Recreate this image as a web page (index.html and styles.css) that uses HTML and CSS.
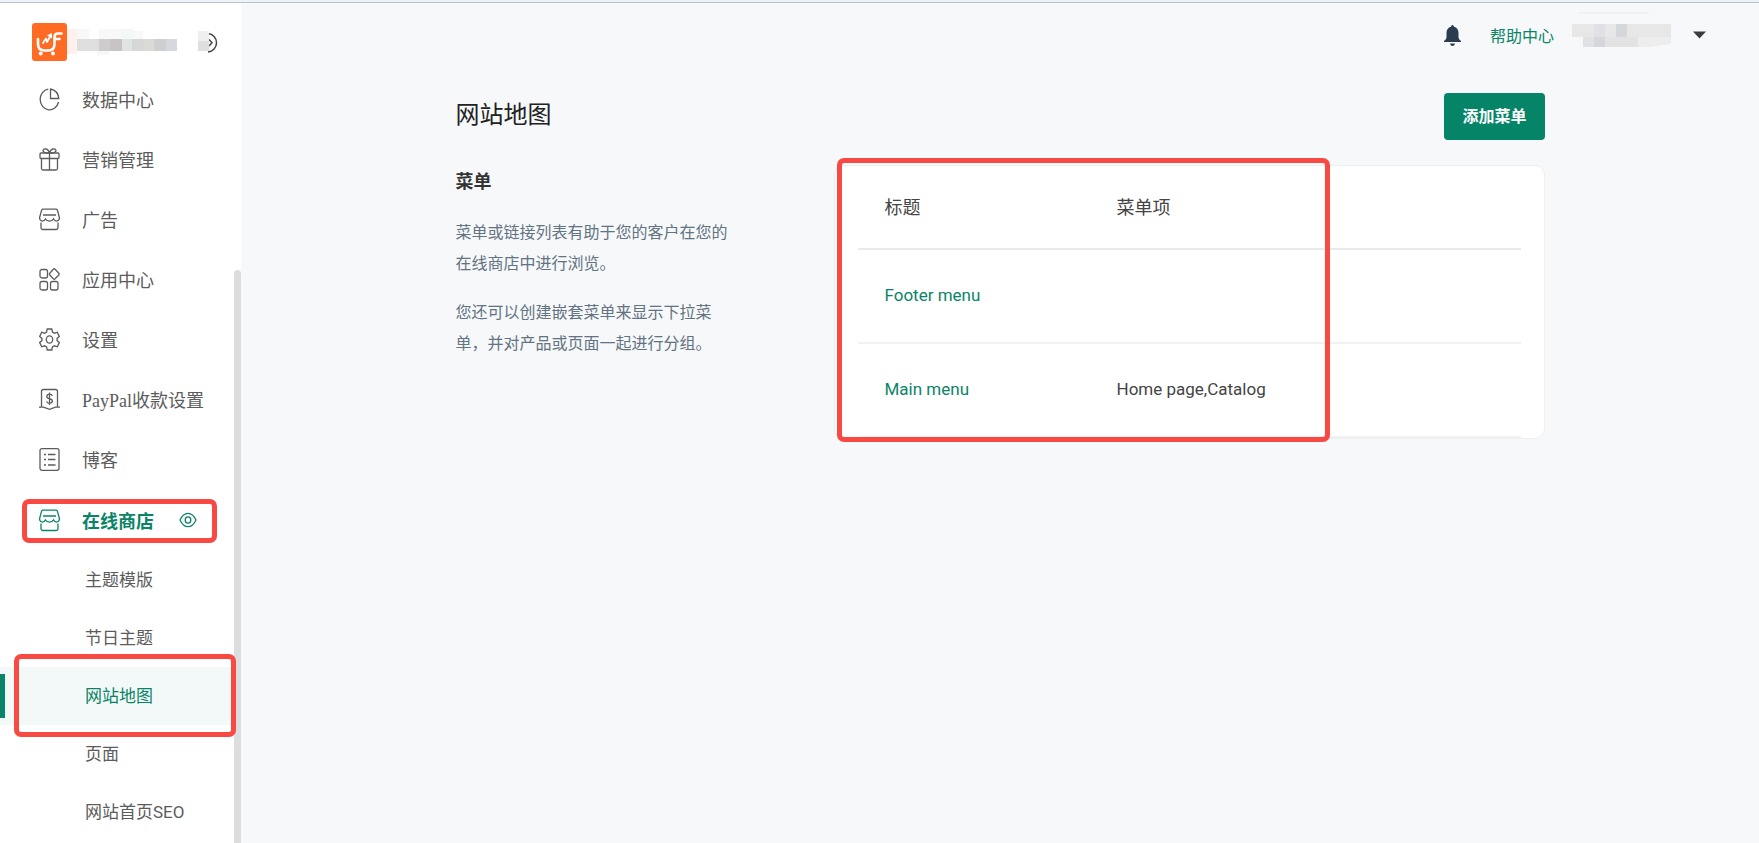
FILE: index.html
```html
<!DOCTYPE html>
<html lang="zh-CN">
<head>
	<meta charset="UTF-8">
	<title>网站地图</title>
	<link rel="stylesheet" href="styles.css">
</head>
<body>

	<!-- shared icons -->
	<svg class="sprite" aria-hidden="true">
		<symbol id="icon-store" viewBox="0 0 21 23">
			<path d="M4 1.200h13q1 0 1.400 1l2 7.300q.3 3.200-2.700 3.600-2.300 0-3.200-2.100-1.200 2.100-4 2.100t-4-2.100q-.9 2.100-3.200 2.100-3-.4-2.700-3.600l2-7.300q.4-1 1.400-1z"/>
			<path d="M4 7h13M2 14.500v5.300q0 1.700 1.700 1.700h13.600q1.700 0 1.700-1.700v-5.300"/>
		</symbol>
	</svg>

	<div class="layout">
		<aside class="sidebar">
			<div class="brand">
				<svg class="logo" viewBox="0 0 35 38">
					<rect width="35" height="38" rx="3" fill="#ff6b22"/>
					<g fill="none" stroke="#fff" stroke-width="2.600" stroke-linecap="round" stroke-linejoin="round">
						<path d="M6 16v5q0 6.500 6.500 6.500h4q6 0 6-6.500v-7q0-3.500 3.500-3.500h3.500M24 16h3.500"/>
						<path d="M11 20l3-4.500 1 3.500 3.500-6" stroke-width="1.800"/>
					</g>
					<path d="M15 12.500l4.800-2.500.3 5.500z" fill="#fff"/>
					<circle cx="8.700" cy="30.500" r="2" fill="#fff"/>
					<circle cx="21" cy="30.500" r="2" fill="#fff"/>
				</svg>
				<svg class="shop-name" viewBox="0 0 112 28" shape-rendering="crispEdges">
					<path fill="#fff0ee" d="M0 1h10v25H0z"/>
					<path fill="#f8f8f8" d="M10 1h12v10H10zM32 1h22v10H32zM66 3h10v8H66zM30 23h12v4H30z"/>
					<path fill="#f3f7f6" d="M54 1h12v10H54z"/>
					<path fill="#dedede" d="M10 11h22v12H10z"/>
					<path fill="#cfcccd" d="M32 11h11v12H32z"/>
					<path fill="#c8c3c5" d="M43 11h12v12H43z"/>
					<path fill="#dfe3e2" d="M55 11h10v12H55z"/>
					<path fill="#d7d7d8" d="M65 11h12v12H65z"/>
					<path fill="#dcdad6" d="M77 11h10v12H77z"/>
					<path fill="#cfcfd0" d="M87 11h12v12H87z"/>
					<path fill="#d6d8df" d="M99 11h11v12H99z"/>
				</svg>
				<button type="button" class="collapse" aria-label="收起">
					<svg viewBox="0 0 21 23">
						<path d="M10 2.500a9.500 9.300 0 0 1 0 18.500M11 8.500l3 3.200-3 3.200" fill="none" stroke="#444" stroke-width="1.500"/>
						<path d="M0 0h11v10H0z" fill="#efefef"/>
						<path d="M0 10h11v10H0z" fill="#dfdfdf"/>
					</svg>
				</button>
			</div>

			<ul class="menu">
				<li><a href="#"><svg class="icon" viewBox="0 0 21 23"><path d="M9.200 1.200A9.300 10.400 0 1 0 19.500 14"/><path d="M11.500 1v9.500h8.300Q19 2.500 11.500 1z"/></svg>数据中心</a></li>
				<li><a href="#"><svg class="icon" viewBox="0 0 21 23"><rect x="1" y="5" width="19" height="5.500" rx="1"/><path d="M2.500 10.500v10q0 1.500 1.500 1.500h13q1.500 0 1.500-1.500v-10M10.500 5v17M10.500 5Q4 5 4 2.500 4.500.5 7 1t3.500 4Q11.500 1.500 14 1t3 1.500Q17 5 10.500 5z"/></svg>营销管理</a></li>
				<li><a href="#"><svg class="icon"><use href="#icon-store"/></svg>广告</a></li>
				<li><a href="#"><svg class="icon" viewBox="0 0 21 23"><rect x="1" y="1.500" width="7.500" height="8.500" rx="2"/><rect x="1" y="13.500" width="7.500" height="8.500" rx="2"/><rect x="11.500" y="13.500" width="7.500" height="8.500" rx="2"/><path d="M14.300 1.200q.9-.8 1.800 0l3.700 4q.8.900 0 1.800l-3.700 3.800q-.9.800-1.800 0L10.800 7q-.8-.9 0-1.800z"/></svg>应用中心</a></li>
				<li><a href="#"><svg class="icon" viewBox="0 0 21 23"><path d="M8.200 1h4.600l.6 3 2 1.200 2.900-1 2 4.200-2.200 2v2.200l2.200 2-2 4.200-2.900-1-2 1.200-.6 3H8.200l-.6-3-2-1.200-2.900 1-2-4.200 2.200-2v-2.200l-2.200-2 2-4.200 2.900 1 2-1.200z"/><ellipse cx="10.500" cy="11.500" rx="3.200" ry="3.700"/></svg>设置</a></li>
				<li><a href="#"><svg class="icon" viewBox="0 0 21 23"><path d="M2.500 19V3.500q0-2 2-2h12q2 0 2 2V19M0 19.200h4.500l6 2.200 6-2.200H21M13.300 8q-.5-1.800-2.800-1.800T7.800 8.400q0 1.700 2.700 2.200t2.900 2.500q0 2-2.900 2.200-2.400 0-2.900-2M10.500 4.500v12.500"/></svg>PayPal收款设置</a></li>
				<li><a href="#"><svg class="icon" viewBox="0 0 21 23"><rect x="1" y="0.700" width="19" height="21.600" rx="2"/><path d="M5 6.500h2M9 6.500h7.500M5 11.500h2M9 11.500h7.500M5 17h2M9 17h7.500"/></svg>博客</a></li>
				<li class="current marked"><a href="#"><svg class="icon"><use href="#icon-store"/></svg>在线商店<svg class="eye" viewBox="0 0 18 16"><path d="M1 8q3.200-6.700 8-6.700T17 8q-3.200 6.700-8 6.700T1 8z"/><ellipse cx="9" cy="8" rx="2.800" ry="3.200"/></svg></a></li>
			</ul>

			<ul class="submenu">
				<li><a href="#">主题模版</a></li>
				<li><a href="#">节日主题</a></li>
				<li class="active marked"><a href="#">网站地图</a></li>
				<li><a href="#">页面</a></li>
				<li><a href="#">网站首页SEO</a></li>
			</ul>
			<div class="scroll-thumb"></div>
		</aside>

		<div class="page">
			<header class="topbar">
				<svg class="bell" viewBox="0 0 17 21" fill="#2b3c4e"><path d="M8.500 0q1.300 0 1.500 1.800 4.500 1.200 4.500 6.200v4.500q0 1.800 2.500 3.500v1H0v-1q2.500-1.700 2.500-3.500V8q0-5 4.500-6.200Q7.200 0 8.500 0zM6 18.500h5Q10.500 21 8.500 21T6 18.500z"/></svg>
				<a class="help" href="#">帮助中心</a>
				<button type="button" class="account" aria-label="账户">
					<svg class="user-name" viewBox="0 0 99 48" shape-rendering="crispEdges">
						<path fill="#f0f1f3" d="M6 1h71v2H6z"/>
						<path fill="#e7e7e8" d="M0 13h22v13H0zM33 13h11v13H33zM55 13h44v13H55z"/>
						<path fill="#e0e1e4" d="M22 13h11v13H22zM11 26h11v10H11z"/>
						<path fill="#d6d7db" d="M44 13h11v13H44zM22 26h11v10H22z"/>
						<path fill="#e3e3e4" d="M33 26h33v10H33z"/>
						<path fill="#ededee" d="M66 26h33v7l-22 3H66z"/>
					</svg>
					<svg class="caret" viewBox="0 0 13 8"><path d="M0 .5h13L6.500 7.500z" fill="#3c3c3c"/></svg>
				</button>
			</header>

			<main class="content">
				<div class="title-row">
					<h1>网站地图</h1>
					<button type="button" class="add">添加菜单</button>
				</div>
				<div class="columns">
					<section class="intro">
						<h2>菜单</h2>
						<p>菜单或链接列表有助于您的客户在您的在线商店中进行浏览。</p>
						<p>您还可以创建嵌套菜单来显示下拉菜单，并对产品或页面一起进行分组。</p>
					</section>
					<section class="card marked">
						<table>
							<thead>
								<tr><th>标题</th><th>菜单项</th></tr>
							</thead>
							<tbody>
								<tr><td><a href="#">Footer menu</a></td><td></td></tr>
								<tr><td><a href="#">Main menu</a></td><td>Home page,Catalog</td></tr>
							</tbody>
						</table>
					</section>
				</div>
			</main>
		</div>
	</div>

</body>
</html>
```
FILE: styles.css
```css
*{
	box-sizing: border-box;
}
body{
	display: flex;
	flex-direction: column;
	height: 100vh;
	margin: 0;
	border-top: 2px solid #edf3f8;
	background-color: #f6f8fa;
	font-family: Roboto, "Noto Sans CJK SC", sans-serif;
	font-size: 18px;
	color: #444;
}
a{
	color: #0a8466;
	text-decoration: none;
}
ul{
	list-style: none;
	margin: 0;
	padding: 0;
}
h1,h2,p{
	margin: 0;
}
button{
	font: inherit;
	padding: 0;
	border: 0;
	background: none;
	cursor: pointer;
}
svg{
	display: block;
	flex: none;
}
.sprite{
	position: absolute;
	width: 0;
	height: 0;
}
.layout{
	display: flex;
	flex: 1;
	min-height: 0;
	border-top: 1px solid #b9c2c8;
}

/*red frames round the highlighted parts*/
.marked{
	position: relative;
}
.marked::after{
	content: "";
	position: absolute;
	z-index: 2;
	border: 5px solid #f84943;
	border-radius: 7px;
	pointer-events: none;
}

/*sidebar*/
.sidebar{
	position: relative;
	flex: none;
	width: 241px;
	overflow: hidden;
	background-color: #fff;
}
.brand{
	display: flex;
	align-items: center;
	height: 66px;
	padding: 12px 0 0 32px;
}
.logo{
	width: 35px;
	height: 38px;
}
.shop-name{
	width: 112px;
	height: 28px;
}
.collapse{
	margin-left: 19px;
}
.collapse svg{
	width: 21px;
	height: 23px;
}
.menu a{
	display: flex;
	align-items: center;
	height: 60px;
	padding-left: 39px;
	color: #5c5c5c;
	font-family: "Liberation Serif", "Noto Sans CJK SC", sans-serif;
}
.icon{
	width: 21px;
	height: 23px;
	margin-right: 22px;
}
.icon,.eye{
	fill: none;
	stroke: currentColor;
	stroke-width: 1.3;
}
.menu .current a{
	height: 62px;
	color: #0a8466;
	font-weight: bold;
}
.current .eye{
	width: 18px;
	height: 16px;
	margin-left: 25px;
}
.current.marked::after{
	top: 10px;
	right: 24px;
	bottom: 8px;
	left: 22px;
}
.submenu a{
	display: block;
	padding-left: 85px;
	line-height: 58px;
	font-size: 17px;
	color: #5c5c5c;
}
.submenu .active{
	background: linear-gradient(#0a8466, #0a8466) 0 7px / 5px 44px no-repeat #f3f9f9;
}
.submenu .active a{
	color: #0a8466;
}
.active.marked::after{
	top: -13px;
	right: 5px;
	bottom: -12px;
	left: 14px;
}
.scroll-thumb{
	position: absolute;
	top: 267px;
	right: 0;
	bottom: -8px;
	width: 7px;
	border-radius: 4px;
	background-color: #dbdddf;
}

/*top bar*/
.page{
	flex: 1;
	min-width: 0;
}
.topbar{
	display: flex;
	align-items: center;
	justify-content: flex-end;
	height: 64px;
	padding-right: 53px;
	font-size: 16px;
}
.bell{
	width: 17px;
	height: 21px;
	margin-right: 29px;
}
.account{
	display: flex;
	align-items: center;
	gap: 22px;
	margin-left: 18px;
}
.user-name{
	width: 99px;
	height: 48px;
}
.caret{
	width: 13px;
	height: 8px;
}

/*content*/
.content{
	max-width: 1089px;
	margin: 0 auto;
	padding-top: 26px;
}
.title-row{
	display: flex;
	align-items: flex-start;
	justify-content: space-between;
	margin-bottom: 25px;
}
h1{
	font-size: 24px;
	line-height: 44px;
	font-weight: normal;
	color: #222;
}
.add{
	height: 47px;
	padding: 0 18px 3px;
	border-radius: 4px;
	background-color: #058467;
	color: #fff;
	font-size: 16px;
	font-weight: bold;
}
.columns{
	display: flex;
	justify-content: space-between;
	align-items: flex-start;
}
.intro{
	width: 280px;
}
h2{
	margin-bottom: 19px;
	font-size: 18px;
	line-height: 33px;
	color: #333;
}
.intro p{
	margin-bottom: 18px;
	font-size: 16px;
	line-height: 31px;
	color: #637381;
}
.card{
	width: 711px;
	padding: 0 23px;
	border: 1px solid #eceeef;
	border-radius: 10px;
	background-color: #fff;
}
.card.marked::after{
	top: -8px;
	right: 214px;
	bottom: -4px;
	left: 2px;
}
table{
	width: 100%;
	border-collapse: collapse;
	table-layout: fixed;
}
th,td{
	height: 94px;
	padding: 0 27px 2px;
	border-bottom: 2px solid #f0f1f1;
	text-align: left;
	font-weight: normal;
}
th{
	height: 83px;
	border-color: #e9eaea;
}
td{
	font-size: 17px;
}
th:first-child{
	width: 35%;
}
```
